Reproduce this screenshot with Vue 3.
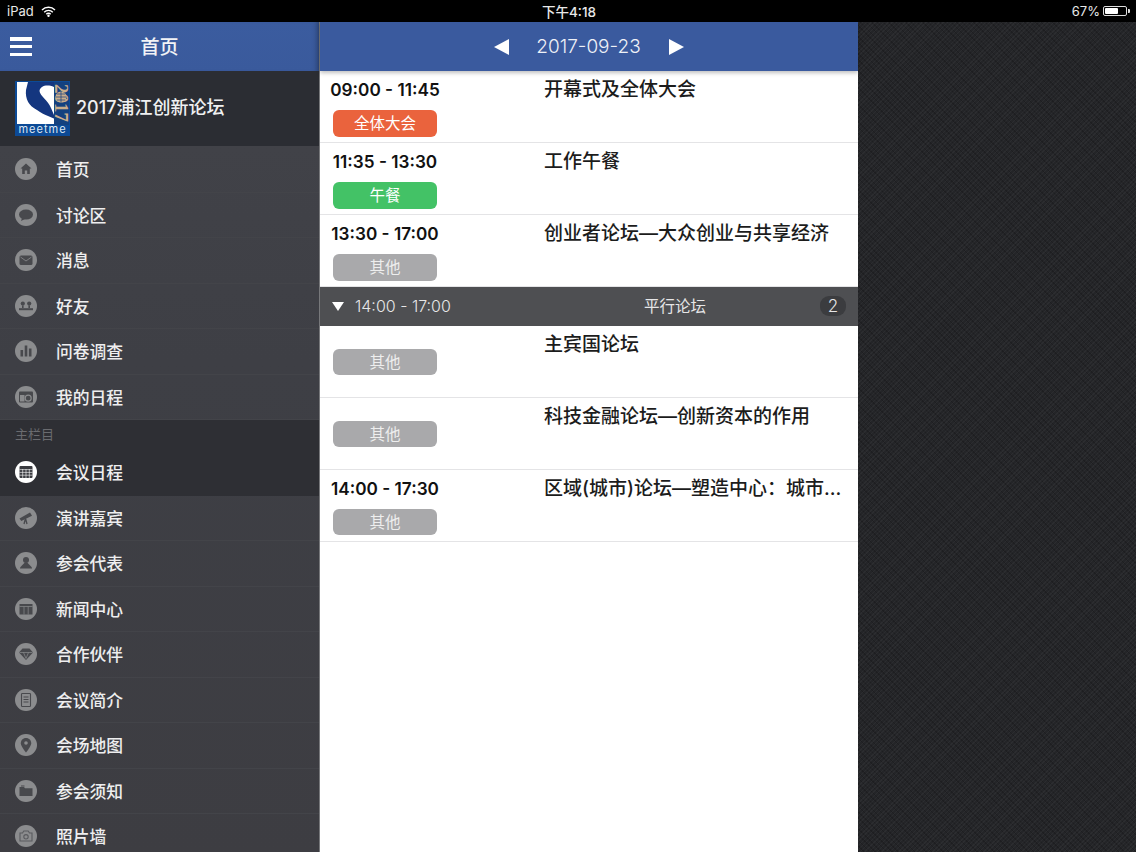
<script setup>
const icons = {
  home: '<path d="M11 5.500 5.500 10.500H7.200V16H9.800V12.600H12.200V16H14.800V10.500H16.500Z" fill="#48494d"/>',
  chat: '<ellipse cx="11" cy="10.600" rx="7" ry="5" fill="#48494d"/><path d="M7 14 6 17 10 15Z" fill="#48494d"/>',
  mail: '<rect x="4.500" y="6.500" width="13" height="9.500" rx="1.500" fill="#48494d"/><path d="M5.500 8 11 12 16.500 8" fill="none" stroke="#8b8c8e" stroke-width=".8"/>',
  friends: '<circle cx="7.800" cy="8.600" r="2.100" fill="#48494d"/><circle cx="14.200" cy="8.600" r="2.100" fill="#48494d"/><path d="M7 10.500H8.600V13H7ZM13.400 10.500H15V13H13.400Z" fill="#48494d"/><rect x="4" y="13.200" width="14" height="2" fill="#48494d"/>',
  chart: '<rect x="5.500" y="10" width="2.600" height="6.500" fill="#48494d"/><rect x="9.700" y="5.500" width="2.600" height="11" fill="#48494d"/><rect x="13.900" y="8.500" width="2.600" height="8" fill="#48494d"/>',
  planner: '<rect x="4" y="5.500" width="14" height="11" rx="1" fill="#48494d"/><rect x="5" y="9" width="4.500" height="6.500" fill="#8b8c8e"/><circle cx="13.200" cy="12.200" r="3" fill="none" stroke="#8b8c8e" stroke-width="1.200"/>',
  calendar: '<rect x="4.500" y="5" width="13" height="12" rx="1" fill="#3a3b40"/><path d="M4.500 8.600H17.500M4.500 11.400H17.500M4.500 14.200H17.500M7.700 8V17M11 8V17M14.300 8V17" stroke="#fff" stroke-width=".6"/>',
  scope: '<path d="M4.500 11.500 15 5.500 17 8.800 6.300 14Z" fill="#48494d"/><path d="M10.500 11.500 9 17M10.500 11.500 12 17" stroke="#48494d" stroke-width="1.300"/>',
  person: '<circle cx="11" cy="8" r="3" fill="#48494d"/><path d="M9.800 10.500 5 15.500V16.500H17V15.500L12.200 10.500Z" fill="#48494d"/>',
  news: '<rect x="4.500" y="6" width="13" height="10.500" fill="#48494d"/><path d="M4.500 8.500H17.500M9 8.500V16.500M13.200 8.500V16.500" stroke="#8b8c8e" stroke-width=".7"/>',
  gem: '<path d="M7.500 5.500H14.500L18 9.500 11 17 4 9.500Z" fill="#48494d"/><path d="M4.500 9.500H17.500M8.500 9.500 11 15.500 13.500 9.500" fill="none" stroke="#8b8c8e" stroke-width=".7"/>',
  doc: '<rect x="6.500" y="4.500" width="9" height="13" rx=".8" fill="none" stroke="#48494d" stroke-width="1.100"/><path d="M8.500 8H13.500M8.500 10.500H13.500M8.500 13H13.500" stroke="#48494d" stroke-width="1"/>',
  pin: '<path d="M11 4C7.800 4 5.800 6.300 5.800 9.200 5.800 12.400 11 18.500 11 18.500S16.200 12.400 16.200 9.200C16.200 6.300 14.200 4 11 4Z" fill="#48494d"/><circle cx="11" cy="9" r="1.800" fill="#8b8c8e"/>',
  folder: '<path d="M4.500 7H9L10 8.200H17.500V16H4.500Z" fill="#48494d"/><path d="M6 6H9.500" stroke="#48494d" stroke-width="1"/>',
  camera: '<path d="M5 8H7.500L8.800 6H13.200L14.500 8H17V16H5Z" fill="none" stroke="#5a5b5f" stroke-width="1.100"/><circle cx="11" cy="11.800" r="2.200" fill="none" stroke="#5a5b5f" stroke-width="1.100"/>'
}

const topMenu = [
  { label: '首页', icon: 'home' },
  { label: '讨论区', icon: 'chat' },
  { label: '消息', icon: 'mail' },
  { label: '好友', icon: 'friends' },
  { label: '问卷调查', icon: 'chart' },
  { label: '我的日程', icon: 'planner' }
]
const mainMenu = [
  { label: '会议日程', icon: 'calendar', active: true },
  { label: '演讲嘉宾', icon: 'scope' },
  { label: '参会代表', icon: 'person' },
  { label: '新闻中心', icon: 'news' },
  { label: '合作伙伴', icon: 'gem' },
  { label: '会议简介', icon: 'doc' },
  { label: '会场地图', icon: 'pin' },
  { label: '参会须知', icon: 'folder' },
  { label: '照片墙', icon: 'camera' }
]
const before = [
  { time: '09:00 - 11:45', title: '开幕式及全体大会', tag: '全体大会', kind: 'orange' },
  { time: '11:35 - 13:30', title: '工作午餐', tag: '午餐', kind: 'green' },
  { time: '13:30 - 17:00', title: '创业者论坛—大众创业与共享经济', tag: '其他', kind: 'grey' }
]
const after = [
  { time: '', title: '主宾国论坛', tag: '其他', kind: 'grey' },
  { time: '', title: '科技金融论坛—创新资本的作用', tag: '其他', kind: 'grey' },
  { time: '14:00 - 17:30', title: '区域(城市)论坛—塑造中心：城市…', tag: '其他', kind: 'grey' }
]
</script>

<template>
  <div class="screen">
    <header class="status">
      <div class="status-left">
        <span>iPad</span>
        <svg class="wifi" width="15" height="11" viewBox="0 0 15 11">
          <path d="M1 4a9.200 9.200 0 0 1 13 0M3.200 6.200a6 6 0 0 1 8.600 0M5.300 8.200a3 3 0 0 1 4.400 0" fill="none" stroke="#fff" stroke-width="1.400"/>
          <circle cx="7.500" cy="9.700" r="1.200" fill="#fff"/>
        </svg>
      </div>
      <div class="status-time">下午4:18</div>
      <div class="status-right">
        <span>67%</span>
        <span class="battery"><span class="battery-fill"></span></span>
        <span class="battery-cap"></span>
      </div>
    </header>

    <div class="body">
      <aside class="sidebar">
        <div class="side-head">
          <button class="burger" aria-label="menu"><i></i><i></i><i></i></button>
          <div class="side-title">首页</div>
        </div>
        <div class="brand">
          <svg class="logo" width="55" height="55" viewBox="0 0 55 55">
            <rect width="55" height="55" fill="#0c4a96"/>
            <rect x="2" y="1" width="37" height="42" fill="#fff"/>
            <path d="M13 1H39V6C32 3 25 5 24.500 10 25 15 33 19 36 27L39 34 40 38 33 35C30 34 26 32 22 29 14 25 10 18 11 9Z" fill="#14367f"/>
            <path d="M39 1H54V44H39Z" fill="#14417f"/>
            <text transform="translate(40 3) rotate(90)" class="logo-year">2017</text>
            <circle cx="46" cy="16" r="5.500" fill="#c9ad8c"/>
            <path d="M40.500 16H51.500M46 10.500V21.500M41.800 13H50.200M41.800 19H50.200" stroke="#14417f" stroke-width=".7"/>
            <text x="27.500" y="52" text-anchor="middle" class="logo-name">meetme</text>
          </svg>
          <div class="brand-name">2017浦江创新论坛</div>
        </div>
        <nav class="menu">
          <a v-for="item in topMenu" :key="item.label" class="menu-item">
            <svg class="menu-icon" width="22" height="22" viewBox="0 0 22 22">
              <circle cx="11" cy="11" r="11" fill="#8b8c8e"/>
              <g v-html="icons[item.icon]"></g>
            </svg>
            <span>{{ item.label }}</span>
          </a>
          <div class="section">主栏目</div>
          <a v-for="item in mainMenu" :key="item.label" class="menu-item" :class="{ active: item.active }">
            <svg class="menu-icon" width="22" height="22" viewBox="0 0 22 22">
              <circle cx="11" cy="11" r="11" :fill="item.active ? '#fff' : '#8b8c8e'"/>
              <g v-html="icons[item.icon]"></g>
            </svg>
            <span>{{ item.label }}</span>
          </a>
        </nav>
      </aside>

      <main class="main">
        <div class="date-bar">
          <span class="arrow-left"></span>
          <span class="date">2017-09-23</span>
          <span class="arrow-right"></span>
        </div>
        <section class="list">
          <article v-for="row in before" :key="row.title" class="row">
            <div class="when">
              <div class="time">{{ row.time }}</div>
              <div class="tag" :class="row.kind"><span>{{ row.tag }}</span></div>
            </div>
            <div class="title">{{ row.title }}</div>
          </article>
          <div class="group">
            <span class="caret"></span>
            <span class="group-time">14:00 - 17:00</span>
            <span class="group-name">平行论坛</span>
            <span class="count">2</span>
          </div>
          <article v-for="row in after" :key="row.title" class="row">
            <div class="when">
              <div v-if="row.time" class="time">{{ row.time }}</div>
              <div v-else class="time-empty"></div>
              <div class="tag" :class="row.kind"><span>{{ row.tag }}</span></div>
            </div>
            <div class="title">{{ row.title }}</div>
          </article>
        </section>
      </main>

      <div class="backdrop"></div>
    </div>
  </div>
</template>

<style>
html, body { margin: 0; background: #000; }
</style>

<style scoped>
.screen {
  width: 1136px;
  height: 852px;
  display: flex;
  flex-direction: column;
  overflow: hidden;
  background: #000;
  font-family: Inter, "Noto Sans CJK SC", sans-serif;
  color: #fff;
}
.status {
  height: 22px;
  flex: none;
  display: grid;
  grid-template-columns: 1fr auto 1fr;
  align-items: center;
  padding: 0 6px 0 7px;
  background: #000;
  font-size: 13px;
  color: #e8e8e8;
}
.status-left { display: flex; align-items: center; gap: 7px; }
.status-time { margin-left: 1px; font-size: 13.500px; font-weight: 500; }
.status-right { display: flex; align-items: center; justify-content: flex-end; }
.battery {
  width: 24px;
  height: 10px;
  margin-left: 3px;
  box-sizing: border-box;
  border: 1px solid #ddd;
  border-radius: 2px;
  padding: 1px;
  display: flex;
}
.battery-fill { width: 67%; background: #fff; border-radius: 1px; }
.battery-cap { width: 2px; height: 4px; background: #ddd; border-radius: 0 1px 1px 0; margin-left: 1px; }
.body { flex: 1; display: flex; min-height: 0; }

.sidebar {
  width: 319px;
  flex: none;
  display: flex;
  flex-direction: column;
  background: #3e3f45;
  border-right: 1px solid #77787b;
  box-sizing: content-box;
  overflow: hidden;
}
.side-head {
  height: 49px;
  flex: none;
  position: relative;
  display: flex;
  align-items: center;
  justify-content: center;
  background: linear-gradient(#3b5c9f, #3a5a9c);
  box-shadow: inset -6px 0 6px -5px rgba(0, 0, 0, .35);
}
.burger {
  position: absolute;
  left: 10px;
  top: 15px;
  width: 22px;
  height: 19px;
  padding: 0;
  border: 0;
  background: none;
  display: flex;
  flex-direction: column;
  justify-content: space-between;
}
.burger i { display: block; height: 3.500px; background: #fff; }
.side-title { font-size: 19px; color: #f2f3f6; font-weight: 500; margin-bottom: 2px; }
.brand {
  height: 75px;
  flex: none;
  display: flex;
  align-items: center;
  padding-left: 15px;
  background: #2b2d33;
  box-sizing: border-box;
}
.logo { flex: none; }
.logo-year { font: 700 19px "Liberation Serif", serif; fill: #c9ad8c; }
.logo-name { font: 400 11px Inter, sans-serif; fill: #dfe8f3; letter-spacing: 1px; }
.brand-name { margin: 0 0 5px 6px; font-size: 18px; font-weight: 500; color: #eff0f1; white-space: nowrap; }
.menu { flex: 1; padding-top: 1px; background: linear-gradient(#414248, #3e3f45 30%, #3d3d42); }
.menu-item {
  height: 45.500px;
  box-sizing: border-box;
  display: flex;
  align-items: center;
  padding-left: 15px;
  font-size: 16.800px;
  font-weight: 500;
  color: #eeeeef;
  border-bottom: 1px solid #434449;
}
.menu-item.active { background: #2e2f34; border-bottom-color: #2e2f34; }
.menu-icon { flex: none; margin-right: 19px; }
.section {
  height: 30px;
  box-sizing: border-box;
  display: flex;
  align-items: center;
  padding: 0 0 3px 15px;
  font-size: 13px;
  color: #6a6b6f;
  background: #2e2f34;
}

.main {
  width: 538px;
  flex: none;
  display: flex;
  flex-direction: column;
  background: #fff;
  position: relative;
}
.date-bar {
  height: 49px;
  flex: none;
  display: flex;
  align-items: center;
  justify-content: center;
  gap: 27px;
  background: #3a5a9e;
  box-shadow: 0 2px 4px rgba(0, 0, 0, .25);
  position: relative;
  z-index: 1;
}
.arrow-left, .arrow-right { width: 0; height: 0; border-top: 8px solid transparent; border-bottom: 8px solid transparent; }
.arrow-left { border-right: 15px solid #fff; }
.arrow-right { border-left: 15px solid #fff; }
.date { font-size: 19px; font-weight: 300; color: #eef1f7; margin-right: 1px; }
.list { flex: 1; }
.row {
  height: 72px;
  box-sizing: border-box;
  display: flex;
  padding-top: 8px;
  border-bottom: 1px solid #e4e4e6;
}
.when {
  width: 130px;
  flex: none;
  display: flex;
  flex-direction: column;
  align-items: center;
}
.time {
  height: 22px;
  line-height: 22px;
  font-size: 17.200px;
  font-weight: 600;
  color: #111;
  white-space: nowrap;
}
.time-empty { height: 6px; }
.tag {
  width: 104px;
  height: 26.500px;
  margin-top: 9px;
  border-radius: 6px;
  display: flex;
  align-items: center;
  justify-content: center;
  font-size: 15.500px;
  color: #fff;
}
.tag span { margin-bottom: 2px; }
.orange { background: #ea633d; }
.green { background: #43c266; }
.grey { background: #a9a9ab; color: #eee; }
.title {
  margin: -1px 0 0 94px;
  width: 301px;
  height: 24px;
  line-height: 24px;
  font-size: 19px;
  font-weight: 500;
  color: #1c1c1c;
  white-space: nowrap;
}
.group {
  height: 38.500px;
  box-sizing: border-box;
  display: flex;
  align-items: center;
  padding: 0 12px;
  background: #4e4f52;
  font-size: 16px;
  color: #e6e6e7;
}
.caret {
  width: 0;
  height: 0;
  border-left: 6px solid transparent;
  border-right: 6px solid transparent;
  border-top: 9px solid #fff;
  margin-right: 11px;
}
.group-time { width: 289px; font-weight: 300; white-space: nowrap; }
.group-name { width: 113px; font-size: 15.500px; margin-bottom: 2px; }
.count {
  margin-left: auto;
  width: 26px;
  height: 20px;
  border-radius: 9px;
  background: #3b3c3f;
  display: flex;
  align-items: center;
  justify-content: center;
  font-size: 17px;
  font-weight: 300;
}
.backdrop {
  flex: 1;
  background-color: #242528;
  background-image:
    repeating-linear-gradient(135deg, rgba(255, 255, 255, .035) 0 1px, transparent 1px 3px),
    repeating-linear-gradient(45deg, rgba(0, 0, 0, .18) 0 1px, transparent 1px 4px);
}
</style>
